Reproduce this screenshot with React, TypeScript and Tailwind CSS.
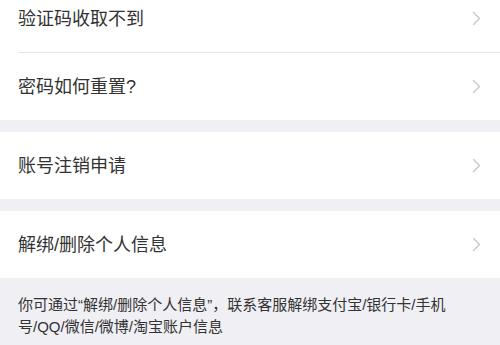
import { Fragment } from "react"

const groups = [["验证码收取不到", "密码如何重置?"], ["账号注销申请"], ["解绑/删除个人信息"]]

function Chevron() {
  return (
    <svg width="9" height="15" viewBox="0 0 9 15" fill="none" className="shrink-0">
      <path d="M1.5 1.5 L7.5 7.5 L1.5 13.5" stroke="#c7c7cc" strokeWidth="1.4" strokeLinecap="round" strokeLinejoin="round" />
    </svg>
  )
}

export default function App() {
  return (
    <div
      className="w-[500px] h-[345px] overflow-hidden bg-[#efeff4] text-[#333333]"
      style={{ fontFamily: '"Liberation Sans", "Noto Sans CJK SC", sans-serif' }}
    >
      <div className="-mt-[15px] flex flex-col gap-[12px]">
        {groups.map((rows, gi) => (
          <div key={gi} className="bg-white">
            {rows.map((label, i) => (
              <Fragment key={label}>
                {i > 0 && <div className="ml-[18px] h-px bg-[#e5e5ea]" />}
                <div className="h-[67px] flex items-center justify-between pl-[18px] pr-[19px]">
                  <span className="text-[18px] leading-none">{label}</span>
                  <Chevron />
                </div>
              </Fragment>
            ))}
          </div>
        ))}
      </div>
      <p className="pl-[18px] pr-[50px] pt-[16px] text-[15px] leading-[22px] text-[#333333]">
        你可通过“解绑/删除个人信息”，联系客服解绑支付宝/银行卡/手机号/QQ/微信/微博/淘宝账户信息
      </p>
    </div>
  )
}
